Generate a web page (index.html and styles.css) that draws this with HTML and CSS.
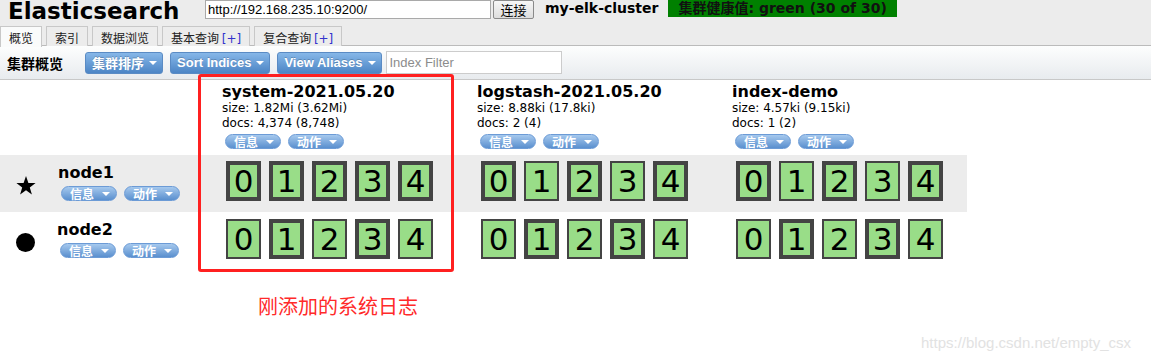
FILE: index.html
```html
<!DOCTYPE html>
<html lang="zh-CN">
<head>
    <meta charset="UTF-8">
    <title>Elasticsearch Head</title>
    <link rel="stylesheet" href="styles.css">
</head>
<body>
    <div class="top">
        <div class="header">
            <h1 class="logo">Elasticsearch</h1>
            <input type="text" class="url-input" value="http://192.168.235.10:9200/">
            <button class="connect">连接</button>
            <span class="cluster-name">my-elk-cluster</span>
            <span class="health">集群健康值: green (30 of 30)</span>
        </div>
        <ul class="tabs">
            <li class="tab active">概览</li>
            <li class="tab">索引</li>
            <li class="tab">数据浏览</li>
            <li class="tab">基本查询 <span class="plus">[+]</span></li>
            <li class="tab">复合查询 <span class="plus">[+]</span></li>
        </ul>
    </div>

    <div class="toolbar">
        <span class="toolbar-title">集群概览</span>
        <button class="tool-btn">集群排序<i class="caret"></i></button>
        <button class="tool-btn">Sort Indices<i class="caret"></i></button>
        <button class="tool-btn">View Aliases<i class="caret"></i></button>
        <input type="text" class="filter-input" placeholder="Index Filter">
    </div>

    <div class="overview">
        <div class="row head-row">
            <div class="node-cell"></div>
            <div class="index-cell">
                <div class="index-name">system-2021.05.20</div>
                <div class="index-stat">size: 1.82Mi (3.62Mi)</div>
                <div class="index-stat">docs: 4,374 (8,748)</div>
                <div class="pills"><span class="pill">信息<i class="caret"></i></span><span class="pill">动作<i class="caret"></i></span></div>
            </div>
            <div class="index-cell">
                <div class="index-name">logstash-2021.05.20</div>
                <div class="index-stat">size: 8.88ki (17.8ki)</div>
                <div class="index-stat">docs: 2 (4)</div>
                <div class="pills"><span class="pill">信息<i class="caret"></i></span><span class="pill">动作<i class="caret"></i></span></div>
            </div>
            <div class="index-cell">
                <div class="index-name">index-demo</div>
                <div class="index-stat">size: 4.57ki (9.15ki)</div>
                <div class="index-stat">docs: 1 (2)</div>
                <div class="pills"><span class="pill">信息<i class="caret"></i></span><span class="pill">动作<i class="caret"></i></span></div>
            </div>
        </div>

        <div class="row node-row alt">
            <div class="node-cell">
                <svg class="node-icon" width="20" height="19" viewBox="0 0 20 19">
                    <polygon points="10,0 12.4,6.9 19.6,7 13.8,11.4 15.9,18.4 10,14.2 4.1,18.4 6.2,11.4 0.4,7 7.6,6.9" fill="#000"/>
                </svg>
                <div class="node-info">
                    <div class="node-name">node1</div>
                    <div class="pills"><span class="pill">信息<i class="caret"></i></span><span class="pill">动作<i class="caret"></i></span></div>
                </div>
            </div>
            <div class="shards">
                <span class="shard">0</span><span class="shard">1</span><span class="shard">2</span><span class="shard">3</span><span class="shard">4</span>
            </div>
            <div class="shards">
                <span class="shard">0</span><span class="shard replica">1</span><span class="shard">2</span><span class="shard replica">3</span><span class="shard">4</span>
            </div>
            <div class="shards">
                <span class="shard">0</span><span class="shard replica">1</span><span class="shard">2</span><span class="shard replica">3</span><span class="shard">4</span>
            </div>
        </div>

        <div class="row node-row">
            <div class="node-cell">
                <span class="node-dot"></span>
                <div class="node-info">
                    <div class="node-name">node2</div>
                    <div class="pills"><span class="pill">信息<i class="caret"></i></span><span class="pill">动作<i class="caret"></i></span></div>
                </div>
            </div>
            <div class="shards">
                <span class="shard replica">0</span><span class="shard">1</span><span class="shard replica">2</span><span class="shard">3</span><span class="shard replica">4</span>
            </div>
            <div class="shards">
                <span class="shard replica">0</span><span class="shard">1</span><span class="shard replica">2</span><span class="shard">3</span><span class="shard replica">4</span>
            </div>
            <div class="shards">
                <span class="shard replica">0</span><span class="shard">1</span><span class="shard replica">2</span><span class="shard">3</span><span class="shard replica">4</span>
            </div>
        </div>
    </div>

    <p class="note">刚添加的系统日志</p>

    <div class="highlight"></div>
    <div class="watermark">https://blog.csdn.net/empty_csx</div>
</body>
</html>
```

FILE: styles.css
```css
body {
    margin: 0;
    height: 361px;
    overflow: hidden;
    position: relative;
    background: #fff;
    color: #000;
    font-family: "DejaVu Sans", Verdana, "Noto Sans CJK SC", sans-serif;
    font-size: 12px;
}

.top {
    background: #ececec;
    border-bottom: 1px solid #bbb;
    height: 45px;
}

.header {
    display: flex;
    align-items: flex-start;
    height: 22px;
}

.logo {
    margin: 0 0 0 8px;
    width: 197px;
    font-size: 23px;
    line-height: 22px;
    font-weight: bold;
}

.url-input {
    width: 286px;
    height: 19px;
    box-sizing: border-box;
    margin: 0;
    padding: 0 2px;
    border: 1px solid #a9a9a9;
    background: #fff;
    font: 13px "Liberation Sans", Arial, sans-serif;
}

.connect {
    width: 41px;
    height: 19px;
    margin-left: 2px;
    padding: 0;
    border: 1px solid #8a8a8a;
    border-radius: 2px;
    background: linear-gradient(#f7f7f7, #dddddd);
    font: 13px "Noto Sans CJK SC", sans-serif;
    line-height: 17px;
}

.cluster-name {
    margin-left: 11px;
    font-size: 14px;
    font-weight: bold;
    line-height: 17px;
}

.health {
    margin-left: 10px;
    padding: 0 10px;
    background: #008000;
    color: #111;
    font-size: 14px;
    font-weight: bold;
    line-height: 17px;
    font-family: "DejaVu Sans", "Noto Sans CJK SC", sans-serif;
}

.tabs {
    display: flex;
    gap: 4px;
    list-style: none;
    margin: 4px 0 0;
    padding: 0;
}

.tab {
    height: 17px;
    padding: 2px 8px 0;
    border: 1px solid #c8c8c8;
    border-bottom: 0;
    background: #ececec;
    font: 12px "Noto Sans CJK SC", sans-serif;
    line-height: 17px;
    color: #222;
}

.tab.active {
    height: 18px;
    background: #fafbfb;
}

.plus {
    color: #3333cc;
    font-family: "DejaVu Sans", sans-serif;
}

.toolbar {
    display: flex;
    align-items: center;
    height: 33px;
    padding-left: 7px;
    border-bottom: 1px solid #c8c8c8;
    background: linear-gradient(#fdfefe, #e8ebee);
}

.toolbar-title {
    width: 78px;
    font: bold 14px "Noto Sans CJK SC", sans-serif;
}

.tool-btn {
    display: flex;
    align-items: center;
    height: 22px;
    margin: 0 7px 0 0;
    padding: 0 5px 0 6px;
    border: 1px solid #5a8bc4;
    border-radius: 3px;
    background: linear-gradient(#86b7e8, #4c85c5);
    color: #fff;
    font: bold 13px "Liberation Sans", "Noto Sans CJK SC", sans-serif;
    text-shadow: 0 -1px 0 rgba(0, 0, 0, 0.2);
}

.tool-btn .caret {
    margin-left: 5px;
}

.caret {
    display: inline-block;
    width: 0;
    height: 0;
    border-left: 4px solid transparent;
    border-right: 4px solid transparent;
    border-top: 4px solid #fff;
    vertical-align: middle;
}

.filter-input {
    width: 176px;
    height: 23px;
    box-sizing: border-box;
    margin: 0 0 0 -3px;
    padding: 0 3px;
    border: 1px solid #ccc;
    background: #fff;
    font: 13px "Liberation Sans", Arial, sans-serif;
}

.filter-input::placeholder {
    color: #8c8c8c;
}

.row {
    display: grid;
    grid-template-columns: 222px 255px 255px 235px;
    width: 967px;
}

.head-row {
    height: 75px;
}

.index-cell {
    padding-top: 3px;
}

.index-name {
    font-size: 16px;
    font-weight: bold;
    line-height: 18px;
}

.index-stat {
    font-size: 12px;
    line-height: 15px;
}

.pills {
    display: flex;
    gap: 7px;
    margin: 3px 0 0 3px;
}

.pill {
    display: inline-flex;
    align-items: center;
    height: 15px;
    box-sizing: border-box;
    padding: 0 6px 0 8px;
    border: 1px solid #6c9bd6;
    border-radius: 8px;
    background: linear-gradient(#a6c9ee, #5a8fce);
    color: #fff;
    font: bold 12px "Noto Sans CJK SC", sans-serif;
    line-height: 13px;
    white-space: nowrap;
}

.pill .caret {
    margin-left: 8px;
}

.node-row {
    height: 57px;
}

.node-row.alt {
    background: #ececec;
}

.node-row + .node-row {
    height: 58px;
}

.node-cell {
    display: flex;
    align-items: flex-start;
}

.node-icon {
    margin: 21px 0 0 16px;
}

.node-dot {
    width: 19px;
    height: 19px;
    margin: 21px 0 0 16px;
    border-radius: 50%;
    background: #000;
}

.node-info {
    margin-left: 22px;
    padding-top: 9px;
}

.node-info .pills {
    margin-top: 4px;
}

.node-name {
    font-size: 16px;
    font-weight: bold;
    line-height: 18px;
}

.shards {
    display: flex;
    gap: 8px;
    padding: 6px 0 0 4px;
}

.node-row + .node-row .shards {
    padding-top: 7px;
}

.shard {
    width: 35px;
    height: 40px;
    box-sizing: border-box;
    border: 4px solid #444;
    background: #99dd88;
    font-size: 31px;
    line-height: 33px;
    text-align: center;
}

.shard.replica {
    border-width: 2px;
    line-height: 37px;
}

.note {
    margin: 23px 0 0 258px;
    color: #ff2a2a;
    font: 20px "Noto Sans CJK SC", sans-serif;
    line-height: 26px;
}

.highlight {
    position: absolute;
    left: 198px;
    top: 74px;
    width: 256px;
    height: 198px;
    box-sizing: border-box;
    border: 3px solid #ff2020;
    border-radius: 3px;
}

.watermark {
    position: absolute;
    left: 921px;
    top: 334px;
    color: #e2e2e2;
    font: 15px "Liberation Sans", Arial, sans-serif;
}
```
